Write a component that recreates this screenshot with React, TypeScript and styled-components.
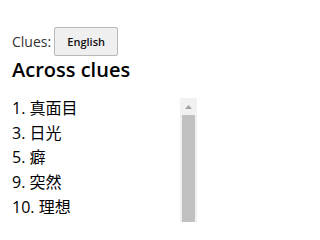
import React from 'react';
import styled, { createGlobalStyle } from 'styled-components';

const GlobalStyle = createGlobalStyle`
  body {
    margin: 8px 8px 0;
    font-family: "Open Sans", "Noto Sans CJK JP", sans-serif;
    color: #000;
    background: #fff;
  }
`;

const clues = [
  { num: 1, text: '真面目' },
  { num: 3, text: '日光' },
  { num: 5, text: '癖' },
  { num: 9, text: '突然' },
  { num: 10, text: '理想' },
  { num: 12, text: '世話' },
];

const App = () => {
  return (
    <Wrapper>
      <GlobalStyle />
      <Toolbar>
        <Label>Clues:</Label>
        <LangButton>English</LangButton>
      </Toolbar>
      <Title>Across clues</Title>
      <ClueBox>
        <ClueList>
          {clues.map((c) => (
            <Clue key={c.num}>
              {c.num}. {c.text}
            </Clue>
          ))}
        </ClueList>
        <ScrollBar>
          <ScrollArrow>
            <svg width="7" height="4" viewBox="0 0 7 4">
              <path d="M0 4 L3.5 0 L7 4 Z" fill="#a3a3a3" />
            </svg>
          </ScrollArrow>
          <ScrollThumb />
        </ScrollBar>
      </ClueBox>
    </Wrapper>
  );
};

export default App;

const Wrapper = styled.main`
  padding: 19px 4px 0;
`;

const Toolbar = styled.div`
  display: flex;
  align-items: center;
  gap: 3px;
`;

const Label = styled.span`
  font-size: 14px;
  color: #333;
`;

const LangButton = styled.button`
  font-family: "Open Sans", sans-serif;
  font-size: 11px;
  font-weight: 600;
  height: 29px;
  width: 64px;
  padding: 0;
  background: #efefef;
  border: 1px solid #b8b8b8;
  border-radius: 2px;
  color: #111;
`;

const Title = styled.h2`
  font-size: 20px;
  font-weight: 600;
  margin: 0;
  line-height: 27px;
`;

const ClueBox = styled.div`
  display: flex;
  width: 185px;
  height: 124px;
  margin-top: 15px;
  overflow: hidden;
`;

const ClueList = styled.ol`
  flex: 1;
  display: flex;
  flex-direction: column;
  gap: 3.67px;
  list-style: none;
  margin: 0;
  padding: 0;
`;

const Clue = styled.li`
  font-size: 16px;
  line-height: 21px;
`;

const ScrollBar = styled.div`
  width: 17px;
  display: flex;
  flex-direction: column;
  background: #f1f1f1;
`;

const ScrollArrow = styled.div`
  height: 17px;
  display: flex;
  align-items: center;
  justify-content: center;
  svg {
    display: block;
  }
`;

const ScrollThumb = styled.div`
  flex: 1;
  margin: 0 2px;
  background: #c1c1c1;
`;
